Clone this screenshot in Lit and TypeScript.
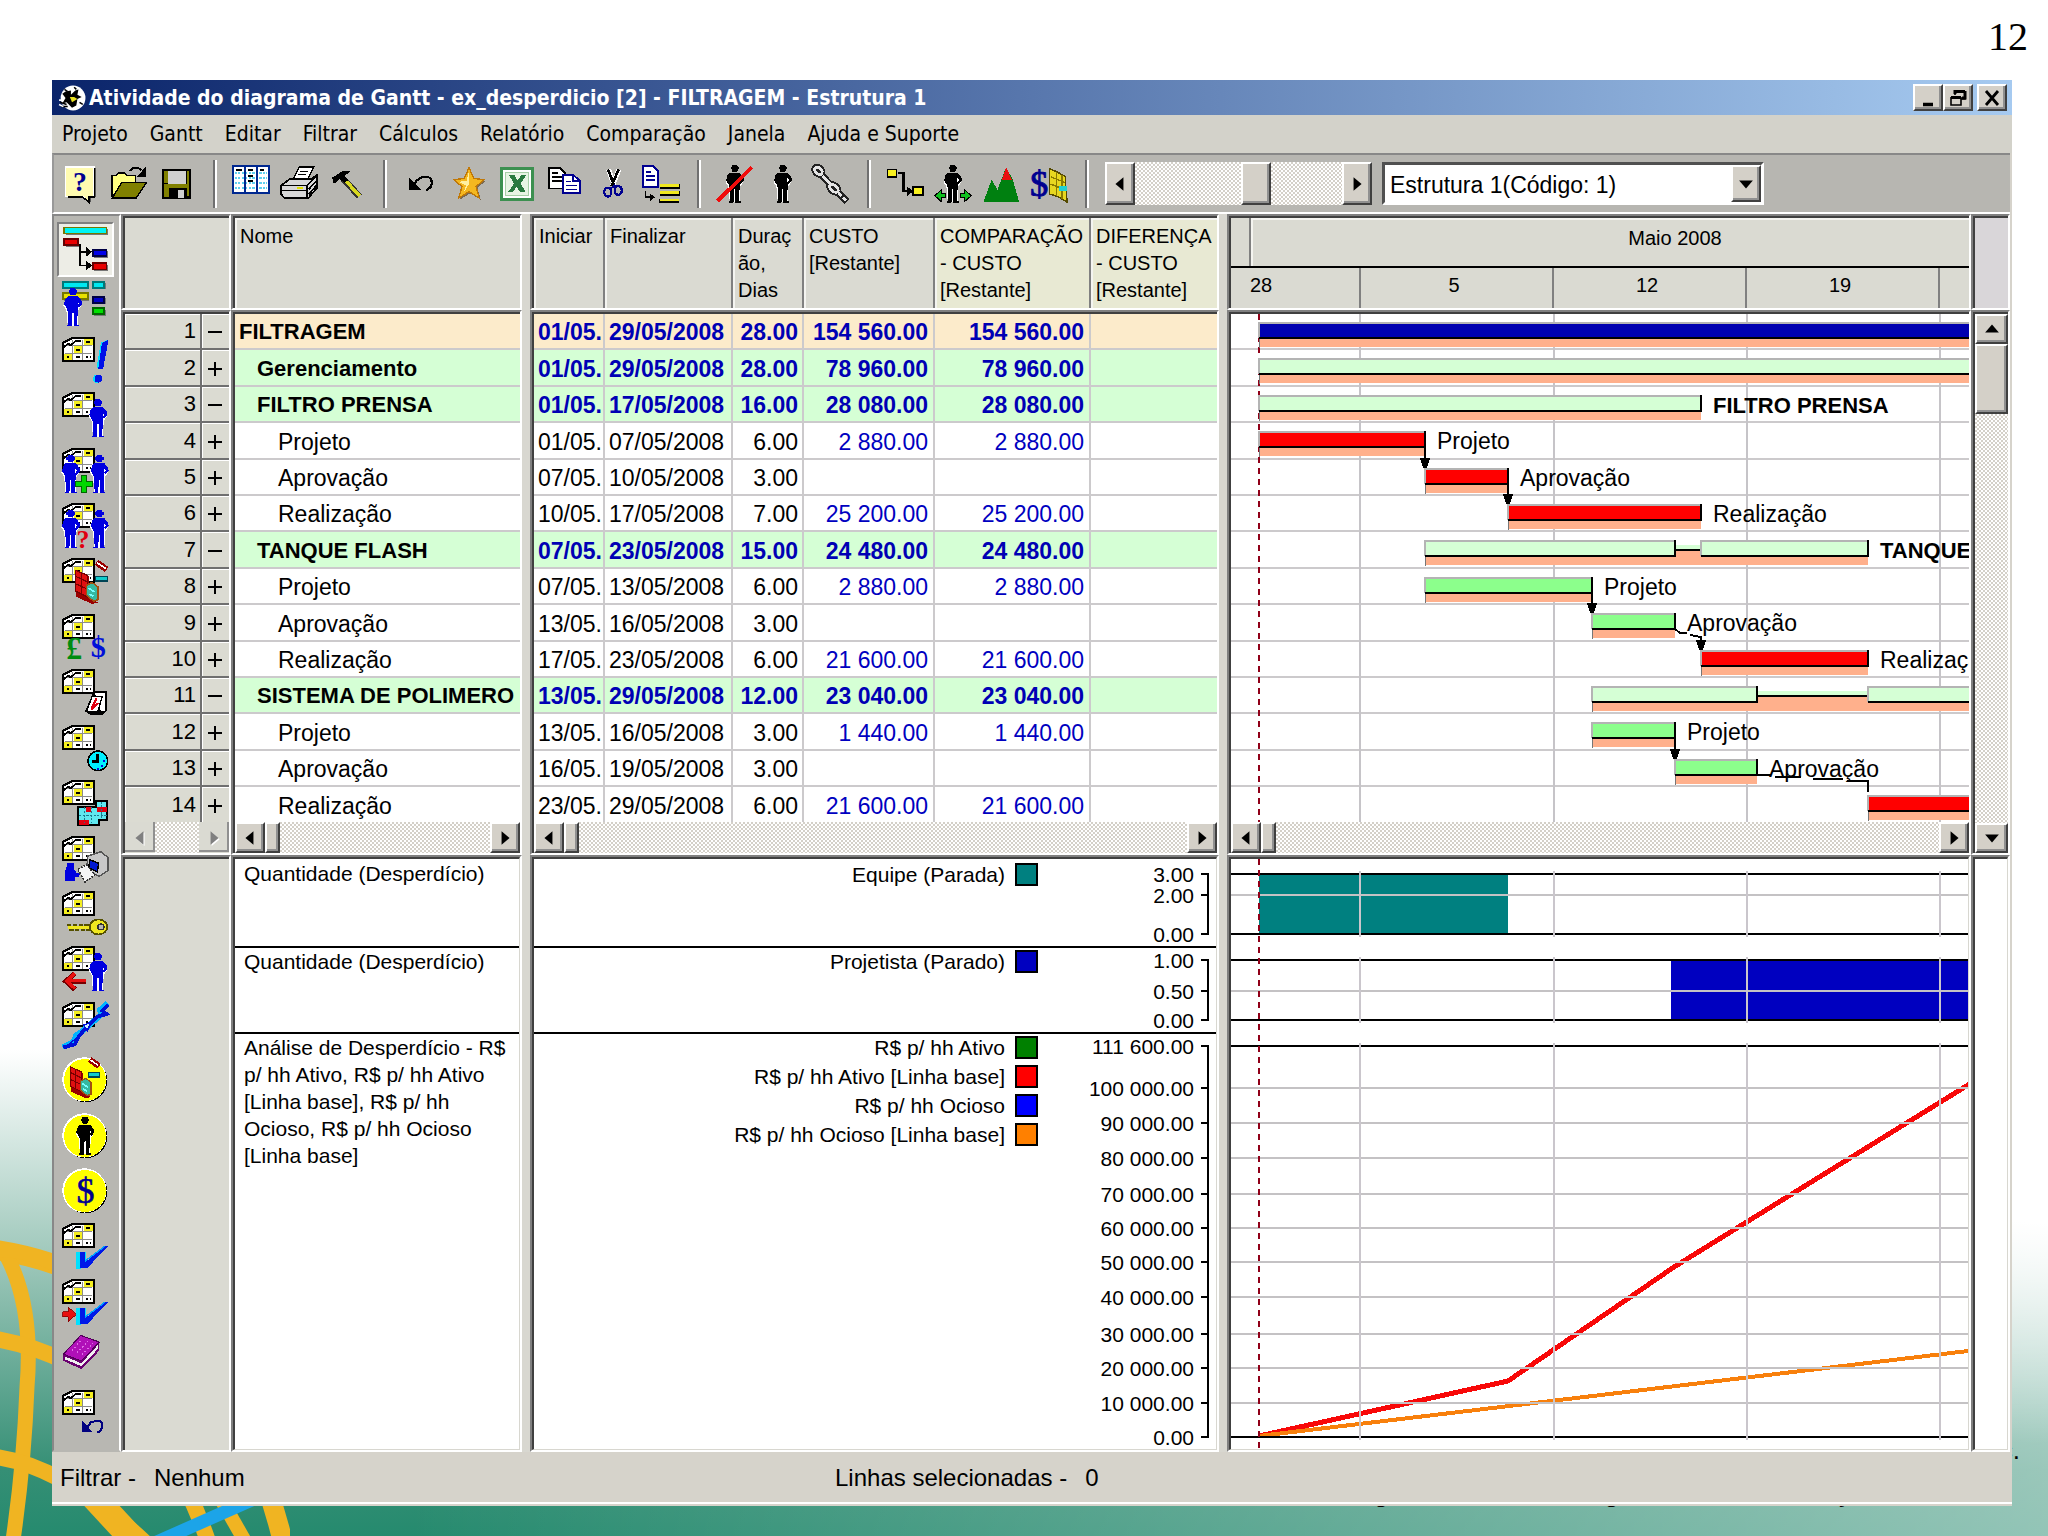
import { LitElement, html, svg, css, nothing, type TemplateResult } from "lit";
import { customElement } from "lit/decorators.js";
import { classMap } from "lit/directives/class-map.js";

type Art = TemplateResult | TemplateResult[];

/* ---------- icon parts (32-unit grid for the side bar, 26 for the tool bar) ---------- */

const sheet = svg`
  <path d="M0.7 4L7 0.8H22.2V16.8H0.7Z" fill="#fff" stroke="#000" stroke-width="1.5"/>
  <path d="M7.5 2V16M14.5 2V16M2 6H21M2 11.5H21" stroke="#8c8c8c" stroke-width="0.9"/>
  <path d="M15.2 1.6h6.3v3.9h-6.3zM8.2 6.6h5.8v4.4H8.2zM1.5 12.1h5.4v4H1.5z" fill="#f4ee20"/>
  <path d="M17 3.5h2.8M9.8 8.8h2.8M3.4 14h1.5M9.6 14h2.8M16.6 14h1.3M19.2 14h1.3" stroke="#000" stroke-width="1.3"/>
  <path d="M1 7.4L4 4.8L6.5 5.6L9.4 2.8L13.5 2.6" stroke="#000" stroke-width="1.4" fill="none"/>`;

const person = (x: number, y: number, fill: string, k = 1) => svg`
  <g transform="translate(${x} ${y}) scale(${k})">
    <path d="M2 7L0 12L2 15L3 26H10L10.5 15L12.5 12L11 8Z" fill="#fff"/>
    <rect x="4.4" y="0" width="4.2" height="4.8" rx="1" fill=${fill}/>
    <path d="M3.6 1.6H9.4V3H3.6Z" fill=${fill}/>
    <path d="M3 5.6H10L12.6 8.6L13 11L10.6 13.6L10 12L11 10.6L9.8 9.4L10 16L9.4 25.4H10.6V26.6H7V17H6.2L5.6 26.6H2.4V25.4H3.2L2.8 15L1.6 12.6L0.4 11L1.4 7.4Z" fill=${fill}/>
  </g>`;

const door = svg`
  <path d="M9 9L19 13V27L25 31L21 32L10 27Z" fill="#900"/>
  <path d="M9.5 8.5L17.5 12V27L9.5 23Z" fill="#e01010" stroke="#700" stroke-width="0.8"/>
  <path d="M10 13L17.5 16.6M10 18L17.5 21.6M13.5 10.5V25" stroke="#700" stroke-width="0.9"/>
  <path d="M17 19L21 17L25 20V29L22 30L17 26Z" fill="#35b8a0" stroke="#a05010"/>
  <path d="M18.5 21l4 2.6M19 25l3 1.6" stroke="#7ff" stroke-width="1.2"/>
  <path d="M24 3L31 8" stroke="#900" stroke-width="4.4"/><path d="M24.4 3.2L30.4 7.4" stroke="#fff" stroke-width="1.2"/>
  <path d="M23 14.5H32" stroke="#045" stroke-width="4"/><path d="M23.5 14H31" stroke="#1cc" stroke-width="2.2"/>`;

const coin = svg`
  <circle cx="16.4" cy="16.4" r="15.2" fill="#000"/>
  <circle cx="15.6" cy="15.6" r="15.4" fill="#fff"/>
  <circle cx="16" cy="16" r="14.6" fill="#ffff00"/>`;

const tick = svg`
  <path d="M9.5 20V32H13L17 25V20Z" fill="#00e0ff"/>
  <path d="M12.5 20.5H16V27.5L30 16H32L17.5 31.5H12.5Z" fill="#0018e8"/>
  <path d="M16 26.5L30 16" stroke="#00a0ff" stroke-width="1"/>`;

const slab = (x: number, y: number, w: number, h: number, fill: string, edge: string) => svg`
  <rect x=${x + 1} y=${y + 1} width=${w} height=${h} fill="#777"/>
  <rect x=${x} y=${y} width=${w} height=${h} fill=${fill} stroke=${edge} stroke-width="1.3"/>`;

const glyph = (x: number, y: number, size: number, fill: string, ch: string) => svg`
  <text x=${x} y=${y} font-size=${size} font-weight="700" fill=${fill}
    font-family="Liberation Serif, serif">${ch}</text>`;

const sideIcons: { label: string; art: Art; bare?: boolean }[] = [
  {
    label: "Gantt", bare: true, art: svg`${slab(1.5, 1, 29.5, 4.2, "#00f4f4", "#777700")}
      ${slab(1.5, 9, 9.5, 4.5, "#e80000", "#600")}
      <path d="M12.5 12.5V27.5H19M12.5 18H19" stroke="#000" stroke-width="1.3" fill="none"/>
      <path d="M17 14.8L21 18L17 21.2ZM17 24.3L21 27.5L17 30.7Z"/>
      ${slab(21.5, 16.5, 9.5, 4.5, "#0000e8", "#004")}
      ${slab(21.5, 25.8, 9.5, 4.5, "#e80000", "#600")}`,
  },
  {
    label: "Recursos", bare: true, art: svg`${slab(0.5, 0.6, 17.5, 4, "#00e8f0", "#077")}
      ${slab(21.5, 0.6, 8, 4, "#00e8f0", "#077")}
      ${slab(0.5, 8.6, 17.5, 4, "#e8e000", "#770")}
      ${slab(21.5, 11, 8, 4.2, "#0000c8", "#004")}
      ${slab(21.5, 19, 8, 4.2, "#00e000", "#060")}${person(1, 5, "#0000e0")}`,
  },
  {
    label: "Prioridade", art: svg`<path d="M27 4L32 2L27.5 21.5H24Z" fill="#00e0ff"/>
      <path d="M27.8 4L32.4 2L28.6 22H25.2Z" fill="#0010e8"/>
      <circle cx="24.4" cy="29" r="2.9" fill="#00e0ff"/><circle cx="25.3" cy="29" r="2.7" fill="#0010e8"/>`,
  },
  { label: "Responsável", art: person(18.5, 5, "#0000e0") },
  {
    label: "Adicionar equipe", art: svg`${person(-0.5, 5, "#0000e0")}${person(19.5, 5, "#0000e0")}
      <path d="M13.5 19h3.6v4.2h4.2v3.6h-4.2V31h-3.6v-4.2H9.4v-3.6h4.1z" fill="#00d800" stroke="#060" stroke-width="0.9"/>`,
  },
  { label: "Consultar equipe", art: svg`${person(-0.5, 5, "#0000e0")}${person(19.5, 5, "#0000e0")}${glyph(10, 31, 18, "#e00010", "?")}` },
  { label: "Materiais", art: door },
  { label: "Custos", art: svg`${glyph(3, 31, 22, "#008c10", "£")}${glyph(20, 30, 21, "#0010d8", "$")}` },
  {
    label: "Calendário", art: svg`<path d="M22 15.5H31.5V29L28 32H20L16 29.5Z" fill="#000"/>
      <path d="M23 17H30V29H27" fill="#fff"/><path d="M21 19H28L25 29.5H17Z" fill="#fff" stroke="#000"/>
      <path d="M24 20.5L21.6 25.6L23.4 25L20.4 28.4" stroke="#e00010" stroke-width="1.7" fill="none"/>`,
  },
  {
    label: "Horário", art: svg`<circle cx="25" cy="25" r="6.8" fill="#00f0ff" stroke="#000" stroke-width="1.1"/>
      <path d="M24.6 20V25.4H20.6" stroke="#000" stroke-width="1.7" fill="none"/>
      <path d="M25 29.6v1.4M29.4 24.6v1.4M28 28v1.4" stroke="#0010d8" stroke-width="1.5"/>`,
  },
  {
    label: "Turnos", art: svg`<path d="M11 18.5H23.5V14.5H31.4V27.5H25.5V31.3H11Z" fill="#60e8f0" stroke="#000" stroke-width="1.4"/>
      <path d="M24 20.5h7M12 29.5h7M17 20.5h3" stroke="#e00010" stroke-width="3"/>
      <path d="M12 24.8H31M15.5 19V30M20.5 19V30M27.5 15V27" stroke="#1a7c90" stroke-width="0.7" stroke-dasharray="1.5 1"/>`,
  },
  {
    label: "Estação", art: svg`<path d="M18 14L27 11L32 15V24L26 28L17 24Z" fill="#c8c8c8" stroke="#555"/>
      <path d="M19.5 16.5L25.5 19L24.5 25L18.5 22Z" fill="#0018d0" stroke="#000"/>
      <path d="M11 23L17 20L23 27L16 32Z" fill="#f4f4f4" stroke="#333" stroke-dasharray="1.4 0.8"/>
      <path d="M4 18.5h4v4l2 3 2.6 1-1 2H9v3H2.4V24Z" fill="#0000e0"/>`,
  },
  {
    label: "Chave", art: svg`<path d="M3.5 23.5H21M5 27H20" stroke="#555000" stroke-width="1.2" stroke-dasharray="3 1"/>
      <rect x="4" y="24" width="18" height="2.6" fill="#f0e820"/>
      <ellipse cx="25.4" cy="25" rx="6.2" ry="5.2" fill="#f0e820" stroke="#555000" stroke-width="1.2"/>
      <ellipse cx="27" cy="25" rx="2.2" ry="2" fill="#b8b7b2" stroke="#333"/>`,
  },
  {
    label: "Remover responsável", art: svg`${person(18.5, 5, "#0000e0")}
      <path d="M17 24.6H4.5M9 19L2.8 24.6L9 30.2" stroke="#700" stroke-width="3.6" fill="none"/>
      <path d="M16.6 24.2H4.6M9 19L3.2 24.4L9 29.6" stroke="#e81010" stroke-width="2.2" fill="none"/>`,
  },
  {
    label: "Vínculos", art: svg`<path d="M31.5 0.8L26.5 5.5L27 9L14.5 20L10 23L8 28L0.5 31.4" stroke="#00b4ff" stroke-width="4" fill="none"/>
      <path d="M32 2L28 6L31 8.4L25 10L14.5 20.5L11 25L9 29.5L1 31.6" stroke="#0010d8" stroke-width="2.6" fill="none"/>
      <path d="M15 16l5.5-2-3 6zM5 29l4-3" fill="#cef" stroke="#0010d8"/>`,
  },
  { label: "Materiais parados", bare: true, art: svg`${coin}<g transform="translate(-3 -1) scale(0.93)">${door}</g>` },
  { label: "Pessoal parado", bare: true, art: svg`${coin}${person(9.5, 2.6, "#000")}` },
  { label: "Valores", bare: true, art: svg`${coin}<text x="10" y="24" font-size="25" fill="#000090" stroke="#000090" stroke-width="0.4" font-family="Liberation Serif, serif">$</text>` },
  { label: "Confirmar", art: tick },
  {
    label: "Confirmar entrada", art: svg`${tick}
      <path d="M0.5 22.8H4.5V19.6L10 24.6L4.5 29.6V26.4H0.5Z" fill="#e81010" stroke="#800" stroke-width="0.6"/>`,
  },
  {
    label: "Livro", bare: true, art: svg`<path d="M0.5 14.5L13 0.5L26 5.5V11.5L13.5 24.5L0.5 18.5Z" fill="#6a0070"/>
      <path d="M2 15.6L13.4 20.4L25 7.6V10.4L13.6 22.4L2 17.6Z" fill="#f0f0f0"/>
      <path d="M1 14L13 1L26 5.6L13.4 18.8Z" fill="#b010b8" stroke="#500058" stroke-width="0.7"/>
      <path d="M7 11.5L14 3.6M10.5 13L18 5M14 14.4L21.5 6.2" stroke="#e070e8" stroke-width="1" stroke-dasharray="1 1.6"/>`,
  },
  {
    label: "Desfazer filtro", art: svg`<path d="M14 21L14 29H21Z" fill="#000080"/>
      <path d="M17.5 26L20 22.6Q28.6 19.4 28 25.6Q27 29 24.5 29.4" stroke="#000080" stroke-width="1.5" fill="none"/>`,
  },
];

const toolGroups: { label: string; art: Art }[][] = [
  [
    {
      label: "Ajuda", art: svg`<path d="M4.5 2H23.5V22H19.5V25.5L15.5 22H3V3Z" fill="#555"/>
        <path d="M2.5 1.5H22V21.5H18V25L14 21.5H2.5Z" fill="#fffbb0" stroke="#fff"/>
        <path d="M22.3 2V21.8H18.4V25.5L14 21.8H4" stroke="#000" fill="none"/>${glyph(7.5, 18, 19, "#000090", "?")}`,
    },
    {
      label: "Abrir", art: svg`<path d="M1.5 22V7H4L5.5 5.5H10L11.5 7H17.5V11.5" fill="#ffff80" stroke="#000"/>
        <path d="M1.5 22.5L8 12H25L18 22.5Z" fill="#808000" stroke="#000"/>
        <path d="M13.5 4Q17 -0.2 21.5 3.5" stroke="#000" stroke-width="1.3" fill="none"/><path d="M24.5 1V8.2H18.5Z"/>`,
    },
    {
      label: "Salvar", art: svg`<rect x="2.6" y="3" width="20" height="20" fill="#000"/><path d="M4 4.4H7V12H4zM19.5 4.4h2v17h-2zM4 13h17v3H4z" fill="#808000"/>
        <rect x="7" y="3.8" width="12.4" height="9" fill="#d0d0d0"/><path d="M4 15h3.5v7H4z" fill="#808000"/>
        <rect x="13.6" y="17.4" width="4" height="5" fill="#d0d0d0"/>`,
    },
  ],
  [
    {
      label: "Tabela", art: svg`<rect x="0.8" y="0.8" width="24.4" height="18.4" fill="#fff" stroke="#002890" stroke-width="1.6"/>
        <path d="M2 5.5H24M2 9H24M2 12.5H24M2 16H24" stroke="#60d0f0" stroke-width="1.3" stroke-dasharray="1.4 1"/>
        <path d="M9 1V19M17 1V19" stroke="#002890" stroke-width="1.2"/><path d="M3 3.4h3.6M11 3.4h3.6M19 3.4h3M11 7.4h3.6M11 11h3.6" stroke="#000" stroke-width="1.5"/>`,
    },
    {
      label: "Imprimir", art: svg`<path d="M9 9.5L13 1.5H23L19 9.5Z" fill="#fff" stroke="#000"/><path d="M13.4 4.4H19M12.4 6.6H18" stroke="#000"/>
        <path d="M0.8 14L7 9.5H21.5L25.4 6.8V15.5L19.5 22.5H3L0.8 20Z" fill="#d8d8d8" stroke="#000" stroke-width="1.2"/>
        <path d="M1 14H18.5L25 7.5M18.5 14V22M1.5 17.5H18.5M19.8 20L25 14M19.6 16.6L25 10.8" stroke="#000" stroke-width="1.2" fill="none"/>
        <path d="M11.5 15.8h4" stroke="#e0e000" stroke-width="1.8"/>`,
    },
    {
      label: "Construir", art: svg`<path d="M10.5 9.5L21.5 21.5" stroke="#333" stroke-width="4.4"/><path d="M11 9.5L21.5 21" stroke="#d8d820" stroke-width="2.4"/>
        <path d="M3.4 12L3 8.6L9.6 4.4L15.4 4L11.5 7.5L14 10L11.4 12.5L8 9.6L4.6 12.6Z" fill="#000"/>`,
    },
  ],
  [
    {
      label: "Desfazer", art: svg`<path d="M4.5 8V16.8H13Z"/><path d="M8.6 12.6Q12 7.4 17.6 8Q21.4 9.6 20 14.6L16.8 17.6" stroke="#000" stroke-width="1.5" fill="none"/>`,
    },
    {
      label: "Favoritos", art: svg`<path d="M13.8 2.6L17 10.2L24.4 11L18.8 15.6L21 23.8L13.8 19.4L6.6 23.8L8.8 15.6L3.2 11L10.6 10.2Z" fill="#7a6a50"/>
        <path d="M13 1.8L16.2 9.2L23.4 10L17.8 14.8L20 22.6L13 18.2L6 22.6L8.2 14.8L2.6 10L9.8 9.2Z" fill="#f4b820" stroke="#c07808" stroke-width="0.9"/>
        <path d="M13 4.6L11.2 11L6 11.4L11 14L9.4 19L13 13Z" fill="#fff0a0"/>`,
    },
    {
      label: "Excel", art: svg`<rect x="2.4" y="2.4" width="21" height="21" fill="#fff" stroke="#3c9050" stroke-width="2.2"/>
        <rect x="5" y="5" width="15.8" height="15.8" fill="#e8f4e4" stroke="#a8cfa8" stroke-width="0.8"/>
        <path d="M7.5 7H11.4L13.4 10.6L16 7H19.4L15.4 12.6L19 18.6H15L12.8 14.8L10 18.6H6.8L11 12.8Z" fill="#2a7a40"/>`,
    },
    {
      label: "Copiar", art: svg`<path d="M2 2H9.5L13 5.5V16H2Z" fill="#fff" stroke="#000" stroke-width="1.2"/><path d="M4 5.5H8M4 8.2H11M4 10.8H11" stroke="#000" stroke-width="1.1"/>
        <path d="M11.5 6.8H18.6L23.4 11V19.4H11.5Z" fill="#fff" stroke="#000090" stroke-width="1.3"/><path d="M18.6 7V11H23" stroke="#000090" fill="none"/>
        <path d="M13.6 11.4h3.6M13.6 14h7.4M13.6 16.8h7.4" stroke="#000090" stroke-width="1.1"/>`,
    },
    {
      label: "Recortar", art: svg`<path d="M10 3L14 14.5M17 3L12.6 14.5" stroke="#fff" stroke-width="3.4"/><path d="M9.6 3L14 14.5M16.8 3L12 14.5" stroke="#000" stroke-width="1.8"/>
        <ellipse cx="9.4" cy="18.6" rx="2.4" ry="3" fill="none" stroke="#000090" stroke-width="1.6"/>
        <ellipse cx="16.6" cy="17.4" rx="2.4" ry="3" fill="none" stroke="#000090" stroke-width="1.6"/><path d="M11.5 16L14 14L15 15" stroke="#000090" stroke-width="1.4" fill="none"/>`,
    },
    {
      label: "Colar linhas", art: svg`<path d="M0.8 0.8H7.6L11 4.4V15H0.8Z" fill="#fff" stroke="#000090" stroke-width="1.4"/><path d="M3 4.6H6M3 7.4H9M3 10.4H9" stroke="#000090" stroke-width="1.2"/>
        <path d="M2.4 17.5V22H7" stroke="#000" stroke-width="1.3" fill="none"/><path d="M5.4 19.4L9 22L5.4 24.8Z"/>
        <path d="M12 14.6H26M12 19.6H26M11.6 24.6H25.4" stroke="#000" stroke-width="3.2"/><path d="M12.4 14H25.4M12 19H25.4M12 24H25" stroke="#f0e820" stroke-width="1.8"/>`,
    },
  ],
  [
    { label: "Sem recurso", art: svg`${person(6.5, 0, "#000", 0.97)}<path d="M1 24.6L24.6 1.6" stroke="#f00c0c" stroke-width="2.6"/>` },
    { label: "Recurso", art: person(6.5, 0, "#000", 0.97) },
    {
      label: "Vínculo", art: svg`<g stroke="#222" stroke-width="4.6" fill="none"><ellipse cx="4.4" cy="4" rx="2" ry="3" transform="rotate(-45 4.4 4)"/>
        <path d="M7 7.4L12.4 13"/><ellipse cx="15" cy="16" rx="2" ry="3.4" transform="rotate(-50 15 16)"/><path d="M18 19L24 25"/></g>
        <g stroke="#e4e4e4" stroke-width="2" fill="none"><ellipse cx="4.4" cy="4" rx="2" ry="3" transform="rotate(-45 4.4 4)"/>
        <path d="M7 7.4L12.4 13"/><ellipse cx="15" cy="16" rx="2" ry="3.4" transform="rotate(-50 15 16)"/><path d="M18 19L24 25" stroke-dasharray="3 1.4"/></g>`,
    },
  ],
  [
    {
      label: "Ligar tarefas", art: svg`<rect x="0.8" y="3" width="6.6" height="5.2" fill="#f8f020" stroke="#000" stroke-width="0.8"/><path d="M8 5.6H12V18H16.6" stroke="#000" stroke-width="1.5" fill="none"/>
        <path d="M14.4 14.6L18.6 18L14.4 21.4Z"/><rect x="18.4" y="15" width="6.8" height="5.4" fill="#f8f020" stroke="#000" stroke-width="1.2"/>`,
    },
    {
      label: "Nivelar", art: svg`${person(6.5, 0, "#000", 0.97)}
        <path d="M0.5 21L5 17V19.6H8V22.4H5V25ZM25.5 21L21 17V19.6H18V22.4H21V25Z" fill="#10c020" stroke="#000" stroke-width="0.7"/>`,
    },
    {
      label: "Picos", art: svg`<path d="M1 25.4L6.6 10L10.6 17L16.5 1.4L21 10L25.4 25.4Z" fill="#008010"/>
        <path d="M16.5 1.4L20.4 10H13.6Z" fill="#e81010"/>`,
    },
    {
      label: "Custos", art: svg`<path d="M13.5 2.5L18 4.5L24.4 8V13L25.4 25.4L19 21.5L13.5 20Z" fill="#e8d820" stroke="#554a00"/>
        <path d="M14 8L24 12M14 13L24 17M18 4.5V21M22 7V23" stroke="#8a7a00"/><path d="M20 14.5h5v3.5h-5z" fill="#20d0d0"/>
        <text x="0" y="21" font-size="25" fill="#000090" stroke="#000090" stroke-width="0.6" font-family="Liberation Serif, serif">$</text>`,
    },
  ],
];

/* ---------- data ---------- */

type Kind = "project" | "group" | "task";
interface Row {
  kind: Kind; name: string; open: boolean;
  start: string; end: string; days: string; cost: string;
}
const rows: Row[] = [
  { kind: "project", name: "FILTRAGEM", open: true, start: "01/05.", end: "29/05/2008", days: "28.00", cost: "154 560.00" },
  { kind: "group", name: "Gerenciamento", open: false, start: "01/05.", end: "29/05/2008", days: "28.00", cost: "78 960.00" },
  { kind: "group", name: "FILTRO PRENSA", open: true, start: "01/05.", end: "17/05/2008", days: "16.00", cost: "28 080.00" },
  { kind: "task", name: "Projeto", open: false, start: "01/05.", end: "07/05/2008", days: "6.00", cost: "2 880.00" },
  { kind: "task", name: "Aprovação", open: false, start: "07/05.", end: "10/05/2008", days: "3.00", cost: "" },
  { kind: "task", name: "Realização", open: false, start: "10/05.", end: "17/05/2008", days: "7.00", cost: "25 200.00" },
  { kind: "group", name: "TANQUE FLASH", open: true, start: "07/05.", end: "23/05/2008", days: "15.00", cost: "24 480.00" },
  { kind: "task", name: "Projeto", open: false, start: "07/05.", end: "13/05/2008", days: "6.00", cost: "2 880.00" },
  { kind: "task", name: "Aprovação", open: false, start: "13/05.", end: "16/05/2008", days: "3.00", cost: "" },
  { kind: "task", name: "Realização", open: false, start: "17/05.", end: "23/05/2008", days: "6.00", cost: "21 600.00" },
  { kind: "group", name: "SISTEMA DE POLIMERO", open: true, start: "13/05.", end: "29/05/2008", days: "12.00", cost: "23 040.00" },
  { kind: "task", name: "Projeto", open: false, start: "13/05.", end: "16/05/2008", days: "3.00", cost: "1 440.00" },
  { kind: "task", name: "Aprovação", open: false, start: "16/05.", end: "19/05/2008", days: "3.00", cost: "" },
  { kind: "task", name: "Realização", open: false, start: "23/05.", end: "29/05/2008", days: "6.00", cost: "21 600.00" },
];

/* Row tops follow the table rows: 36 and 37 pixels in a repeating set of five. */
const tops = [0, 36, 73, 109, 146, 182, 218, 255, 291, 328, 364, 400, 437, 473];
const weeks = [129, 323, 516, 709];
const FAR = 4000;

interface Bar { row: number; spans: [number, number][]; color: string; label?: string; bold?: boolean }
const PALE = "#d5ffd5", RED = "#ff0000", GREEN = "#8cff8c";
const bars: Bar[] = [
  { row: 0, spans: [[28, FAR]], color: "#0000b0" },
  { row: 1, spans: [[28, FAR]], color: PALE },
  { row: 2, spans: [[28, 470]], color: PALE, label: "FILTRO PRENSA", bold: true },
  { row: 3, spans: [[28, 194]], color: RED, label: "Projeto" },
  { row: 4, spans: [[194, 277]], color: RED, label: "Aprovação" },
  { row: 5, spans: [[277, 470]], color: RED, label: "Realização" },
  { row: 6, spans: [[194, 444], [470, 637]], color: PALE, label: "TANQUE FLASH", bold: true },
  { row: 7, spans: [[194, 361]], color: GREEN, label: "Projeto" },
  { row: 8, spans: [[361, 444]], color: GREEN, label: "Aprovação" },
  { row: 9, spans: [[470, 637]], color: RED, label: "Realização" },
  { row: 10, spans: [[361, 526], [637, FAR]], color: PALE },
  { row: 11, spans: [[361, 444]], color: GREEN, label: "Projeto" },
  { row: 12, spans: [[444, 526]], color: GREEN, label: "Aprovação" },
  { row: 13, spans: [[637, FAR]], color: RED },
];
const drops = [[194, 3], [277, 4], [361, 7], [444, 11]];

interface Track { title: string[]; legend: [string, string][]; ticks: [number, string][]; height: number }
const tracks: Track[] = [
  { title: ["Quantidade (Desperdício)"], legend: [["Equipe (Parada)", "#008080"]], ticks: [[15, "3.00"], [36, "2.00"], [75, "0.00"]], height: 86 },
  { title: ["Quantidade (Desperdício)"], legend: [["Projetista (Parado)", "#0000c0"]], ticks: [[12, "1.00"], [43, "0.50"], [72, "0.00"]], height: 83 },
  {
    title: ["Análise de Desperdício - R$", "p/ hh Ativo, R$ p/ hh Ativo", "[Linha base], R$ p/ hh", "Ocioso, R$ p/ hh Ocioso", "[Linha base]"],
    legend: [["R$ p/ hh Ativo", "#008000"], ["R$ p/ hh Ativo [Linha base]", "#ff0000"], ["R$ p/ hh Ocioso", "#0000ff"], ["R$ p/ hh Ocioso [Linha base]", "#ff8000"]],
    ticks: [[12, "111 600.00"], [54, "100 000.00"], [89, "90 000.00"], [124, "80 000.00"], [160, "70 000.00"], [194, "60 000.00"],
      [228, "50 000.00"], [263, "40 000.00"], [300, "30 000.00"], [334, "20 000.00"], [369, "10 000.00"], [403, "0.00"]],
    height: 415,
  },
];

const menus = ["Projeto", "Gantt", "Editar", "Filtrar", "Cálculos", "Relatório", "Comparação", "Janela", "Ajuda e Suporte"];

@customElement("app-root")
export class AppRoot extends LitElement {
  static styles = css`
    :host { display: block; font-family: "Liberation Sans", Arial, sans-serif; color: #000; }
    * { box-sizing: border-box; }
    button { font: inherit; color: inherit; padding: 0; margin: 0; }
    svg { display: block; }

    .slide {
      position: relative; min-height: 100vh; display: flex; flex-direction: column; overflow: hidden;
      padding: 0 36px 31px 52px;
      background:
        radial-gradient(ellipse 50% 22% at 103% 72%, #fff 35%, rgba(255, 255, 255, 0) 100%),
        linear-gradient(to right, rgba(255, 255, 255, 0) 20%, rgba(255, 255, 255, 0.5)),
        linear-gradient(#fff 1050px, #8fbfb0 1290px, #358f75 1470px, #258a6e);
    }
    .globe { position: absolute; left: 0; bottom: 0; }
    .under { position: absolute; font-size: 26px; line-height: 30px; }
    .source { right: 28px; bottom: 72px; }
    .note { right: 200px; bottom: 29px; display: flex; gap: 216px; }
    .page { height: 80px; margin: 0 -16px 0 0; text-align: right; font: 40px/40px "Liberation Serif", "Times New Roman", serif; padding: 17px 0 0 0; }

    .window { position: relative; flex: 1; display: flex; flex-direction: column; background: #d6d3cb; }
    .title {
      height: 35px; display: flex; align-items: center; padding: 0 5px 0 6px; color: #fff;
      background: linear-gradient(to right, #0a246a, #a6caf0);
      font: bold 21px/30px "DejaVu Sans Condensed", "Noto Sans", sans-serif;
    }
    .title h1 { font: inherit; margin: 0 0 0 3px; flex: 1; white-space: nowrap; }
    .raised {
      background: #d4d0c8; border: 2px solid; border-color: #fff #404040 #404040 #fff;
      box-shadow: inset -2px -2px #909090; border-radius: 0; display: flex; align-items: center; justify-content: center;
    }
    .sys { width: 30px; height: 27px; }
    .sys.close { margin-left: 4px; }

    .menu { height: 38px; display: flex; align-items: center; background: #d3d2ca; }
    .menu button { border: 0; background: none; padding: 0 11px; font: 21px/30px "DejaVu Sans Condensed", "Noto Sans", sans-serif; }
    .menu button:first-child { padding-left: 10px; }

    .tools {
      height: 61px; margin-right: 2px; display: flex; align-items: center; background: #b7b6b1;
      border-top: 2px solid #888; border-left: 2px solid #999; border-bottom: 2px solid #fff; padding-left: 2px;
    }
    .tool { width: 48px; height: 44px; padding-left: 2px; border: 0; background: none; display: flex; align-items: center; justify-content: center; }
    .tool svg, .side svg { overflow: visible; flex: none; shape-rendering: crispEdges; }
    .sep { width: 4px; height: 48px; margin: 0 9px 0 13px; border-left: 2px solid #707070; border-right: 2px solid #fff; }
    .pan { display: flex; margin-left: 7px; height: 43px; }
    .pan button { width: 30px; }
    .pan input { appearance: none; width: 207px; margin: 0; height: 43px; }
    .pan input, .track { background: repeating-conic-gradient(#fff 0 25%, #d4d0c8 0 50%) 0 0 / 4px 4px; }
    .pan input::-webkit-slider-thumb {
      appearance: none; width: 30px; height: 43px; background: #d4d0c8; border: 2px solid;
      border-color: #fff #404040 #404040 #fff; box-shadow: inset -2px -2px #909090;
    }
    .combo {
      position: relative; width: 382px; height: 43px; margin-left: 10px; background: #fff; display: flex;
      border: 3px solid; border-color: #505050 #fff #fff #505050;
    }
    .combo select { appearance: none; flex: 1; border: 0; background: none; font: 23px/34px "Liberation Sans", Arial, sans-serif; padding: 2px 32px 0 5px; color: #000; }
    .combo .arrow { position: absolute; right: 0; top: 0; bottom: 0; width: 30px; pointer-events: none; }

    .body { flex: 1; display: flex; margin-right: 2px; }
    .side {
      width: 69px; display: grid; grid-auto-rows: 1fr; padding: 6px 5px 9px 3px; background: #b8b7b2;
      border: 2px solid; border-color: #888 #fff #b8b7b2 #888;
    }
    .side button { border: 2px solid transparent; background: none; display: flex; align-items: flex-start; justify-content: flex-start; padding: 2px 0 0 3px; }
    .side .on { background: #edede6; border-color: #808080 #fff #fff #808080; }

    .panes {
      flex: 1; min-width: 0; display: grid; background: #d8d7d0;
      grid-template-columns: 110px 291px 8px 689px 8px minmax(0, 1fr) 39px;
      grid-template-rows: 96px auto minmax(0, 1fr);
    }
    .pane { min-width: 0; border: 2px solid; border-color: #808080 #fff #fff #808080; display: flex; }
    .in { flex: 1; min-width: 0; display: flex; flex-direction: column; border: 2px solid #404040; border-right: 0; border-bottom: 0; background: #dadad2; overflow: hidden; }
    .white .in { background: #fff; }
    .lower .in { border-right: 1px solid #d8d7d0; border-bottom: 1px solid #d8d7d0; }
    .flat .in { background: #d9d6d9; }
    .gap { grid-row: span 1; }

    table { border-collapse: separate; border-spacing: 0; table-layout: fixed; width: 100%; }
    th { text-align: left; vertical-align: top; font-weight: 400; font-size: 20px; line-height: 27px; padding: 5px 0 0 5px; height: 90px; white-space: nowrap; border-right: 2px solid #808080; box-shadow: inset 2px 2px #f4f4f0; }
    th:last-child { border-right: 0; }
    th.alt { background: #e8e9d3; }
    .c1 { width: 71px; } .c2 { width: 128px; } .c3 { width: 71px; } .c4 { width: 131px; } .c5 { width: 156px; }
    tbody tr { height: 36px; }
    tbody tr:nth-child(5n + 2), tbody tr:nth-child(5n + 4) { height: 37px; }
    tbody tr:last-child { height: 35px; }
    td { padding: 2px 5px 0 4px; font-size: 23px; line-height: 32px; white-space: nowrap; overflow: hidden; border-bottom: 2px solid #cccacc; border-right: 2px solid #cccacc; background: #fff; }
    td:last-child { border-right: 0; }
    tbody tr:last-child td { border-bottom: 0; }
    .num { text-align: right; }
    td.c3 { padding-right: 4px; }
    .cost { color: #0000c0; }
    .project td { background: #fcebcb; font-weight: 700; color: #0000b4; }
    .group td { background: #d5ffd5; font-weight: 700; color: #0000b4; }
    .names .project td, .names .group td { color: #000; font-size: 22px; }
    .names .group td { padding-left: 22px; }
    .names .task td { padding-left: 43px; }
    .nums td { background: #dbdbd2; color: #000; font-weight: 400; font-size: 22px; border-color: #707070; box-shadow: inset 1px 1px #fff; padding: 0 4px 0 0; text-align: right; }
    .nums td:last-child { padding: 0; text-align: center; }
    .nums button { border: 0; background: none; width: 26px; height: 30px; display: grid; place-items: center; padding-top: 2px; }
    .n1 { width: 77px; }

    .month, .weeks { display: flex; white-space: nowrap; font-size: 20px; line-height: 27px; }
    .month { height: 50px; border-bottom: 2px solid #000; }
    .month i { flex: none; width: 20px; border-right: 2px solid #808080; }
    .month b { flex: none; width: 848px; text-align: center; font-weight: 400; padding-top: 7px; box-shadow: inset 2px 2px #f4f4f0; }
    .weeks { flex: 1; }
    .weeks span { flex: none; width: 193px; text-align: center; padding: 4px 5px 0 0; border-right: 2px solid #808080; }
    .weeks span:first-child { width: 130px; text-align: left; padding-left: 19px; }

    .hbar { height: 31px; display: flex; }
    .hbar button { width: 30px; flex: none; }
    .thumb { flex: none; width: 15px; }
    .track { flex: 1; }
    .vbar { flex: 1; display: flex; flex-direction: column; }
    .vbar button { height: 30px; }
    .vthumb { height: 70px; }

    .section { display: flex; border-bottom: 2px solid #000; font-size: 21px; padding-right: 6px; }
    .section:last-child { border-bottom: 0; }
    .h0 { height: 89px; } .h1 { height: 86px; } .h2 { flex: 1; }
    .head { line-height: 27px; padding: 1px 0 0 9px; white-space: nowrap; }
    .h1 .head, .h2 .head { padding-top: 0; }
    .legend { flex: 1; display: flex; flex-direction: column; align-items: flex-end; gap: 6px; margin: 0; padding: 4px 33px 0 0; list-style: none; }
    .h1 .legend, .h2 .legend { padding-top: 2px; }
    .legend li { display: flex; gap: 10px; line-height: 23px; height: 23px; }
    .legend i { width: 23px; height: 23px; border: 2px solid #000; background: var(--ink); }

    .status { height: 50px; padding: 2px 8px 0; display: grid; grid-template-columns: 775px 1fr; align-items: center; font-size: 24px; line-height: 30px; }
    .status span { display: flex; gap: 18px; white-space: nowrap; }
    .foot { height: 4px; border-top: 2px solid #fff; }
  `;

  private arrow(dir: "left" | "right" | "up" | "down", off = false) {
    const d = { left: "M10 1V13L3 7Z", right: "M4 1V13L11 7Z", up: "M1 10H13L7 3Z", down: "M1 4H13L7 11Z" }[dir];
    return html`<svg width="16" height="16" viewBox="0 0 14 14" aria-hidden="true">
      ${off ? svg`<path d=${d} fill="#fff" transform="translate(1 1)"/>` : nothing}<path d=${d} fill=${off ? "#808080" : "#000"}/></svg>`;
  }

  private hbar(thumb = true) {
    return html`<div class="hbar">
      <button class="raised" aria-label="Rolar para a esquerda">${this.arrow("left", !thumb)}</button>
      ${thumb ? html`<div class="thumb raised"></div>` : nothing}
      <div class="track"></div>
      <button class="raised" aria-label="Rolar para a direita">${this.arrow("right", !thumb)}</button>
    </div>`;
  }

  private bar(b: Bar) {
    const y = tops[b.row] + 8;
    const last = b.spans[b.spans.length - 1][1];
    return svg`
      <rect x=${b.spans[0][0]} y=${y + 17} width=${last - b.spans[0][0]} height="8" fill="#ffb08c"/>
      ${b.spans.slice(1).map((s, i) => {
        const from = b.spans[i][1];
        return svg`<rect x=${from} y=${y + 5} width=${s[0] - from} height="5" fill=${PALE}/>
          <rect x=${from} y=${y + 11} width=${s[0] - from} height="8" fill="#ffb08c"/>
          <rect x=${from} y=${y + 9} width=${s[0] - from} height="2"/>`;
      })}
      ${b.spans.map(([a, z]) => svg`
        <rect x=${a} y=${y} width=${z - a} height="17" fill=${b.color}/>
        <path d="M${a} ${y + 16}V${y + 1}H${z}" stroke="#b4b4b4" stroke-width="2" fill="none"/>
        <path d="M${a} ${y + 16}H${z}V${y}" stroke="#000" stroke-width="2" fill="none"/>`)}
      <path d="M${b.spans[0][0]} ${y + 17}V${y + 26}" stroke="#777" stroke-width="1"/>
      ${b.label ? svg`<text x=${last + 12} y=${y + 18} font-size=${b.bold ? 22 : 23} font-weight=${b.bold ? 700 : 400}>${b.label}</text>` : nothing}`;
  }

  private gantt() {
    return html`<svg width="100%" height="508" role="img" aria-label="Diagrama de Gantt" shape-rendering="crispEdges">
      ${tops.slice(1).map((t) => svg`<rect x="0" y=${t - 2} width="100%" height="2" fill="#cccacc"/>`)}
      ${weeks.map((x) => svg`<rect x=${x - 1} y="0" width="2" height="508" fill="#c6c4c8"/>`)}
      <path d="M28 0V508" stroke="#900018" stroke-width="2" stroke-dasharray="6 5"/>
      ${bars.map((b) => this.bar(b))}
      ${drops.map(([x, r]) => svg`<path d=${`M${x} ${tops[r] + 24}V${tops[r + 1] + 4}`} stroke="#000" stroke-width="2"/>
        <path d=${`M${x - 5} ${tops[r + 1] - 2}H${x + 5}L${x + 2} ${tops[r + 1] + 8}H${x - 2}Z`}/>`)}
      <path d="M444 315L449 319H456M459 321L470 323V334" stroke="#000" stroke-width="2" fill="none"/>
      <path d="M465 326H475L472 336H468Z"/>
      <path d="M526 461H540M544 463H570M582 465H612M616 467H637V478" stroke="#000" stroke-width="2" fill="none"/>
    </svg>`;
  }

  private charts() {
    const frames = [[15, 75], [101, 161], [187, 578]];
    const faint = [36, 132, 229, 264, 299, 335, 369, 403, 438, 475, 509, 544];
    return html`<svg width="100%" height="590" role="img" aria-label="Análise de desperdício" shape-rendering="crispEdges">
      <rect x="28" y="15" width="249" height="60" fill="#008080"/>
      <rect x="440" y="101" width="4000" height="60" fill="#0000c0"/>
      <path d="M28 577L277 522L443 408L737 226L1051 32" stroke="#f80808" stroke-width="5" fill="none"/>
      <path d="M28 577L737 492L1446 407" stroke="#f8800c" stroke-width="4" fill="none"/>
      ${faint.map((y) => svg`<rect x="0" y=${y - 1} width="100%" height="2" fill="#c4c2c4"/>`)}
      ${frames.map(([a, z]) => svg`<rect x="0" y=${a - 1} width="100%" height="2"/><rect x="0" y=${z - 1} width="100%" height="2"/>
        ${weeks.map((x) => svg`<rect x=${x - 1} y=${a - 3} width="2" height=${z - a + 6} fill="#cac6cc"/>`)}`)}
      <path d="M28 0V590" stroke="#900018" stroke-width="2" stroke-dasharray="6 5"/>
    </svg>`;
  }

  private axis(t: Track) {
    const first = t.ticks[0][0], last = t.ticks[t.ticks.length - 1][0];
    return html`<svg width="139" height=${t.height} shape-rendering="crispEdges" role="img" aria-label="Escala">
      <path d="M137 ${first}V${last}${t.ticks.map(([y]) => `M130 ${y}H138`).join("")}" stroke="#000" stroke-width="2" fill="none"/>
      ${t.ticks.map(([y, label]) => svg`<text x="123" y=${y + 8} text-anchor="end" font-size="21">${label}</text>`)}
    </svg>`;
  }

  private pane(cls: string, content: unknown) {
    return html`<section class="pane ${cls}"><div class="in">${content}</div></section>`;
  }

  render() {
    return html`
      <main class="slide">
        <svg class="globe" width="290" height="310" viewBox="0 0 290 310" fill="none" stroke="#f0b422" aria-hidden="true">
          <path d="M-10 22Q150 44 240 200Q268 250 284 320" stroke-width="20"/>
          <path d="M4 24Q34 76 27 160Q24 240 12 320" stroke-width="15"/>
          <path d="M-4 112Q150 140 210 320" stroke-width="16"/>
          <path d="M-4 230Q70 240 160 330" stroke-width="16"/>
          <path d="M60 40Q20 20 -6 24" stroke-width="14"/>
          <path d="M90 266L140 320" stroke-width="26"/>
          <path d="M222 274L246 316" stroke-width="14"/>
          <path d="M150 318L254 272" stroke="#1ca4e8" stroke-width="13"/>
        </svg>
        <div class="under source">c.</div>
        <div class="under note"><span>g</span><span>g</span><span>ç</span></div>
        <div class="page">12</div>
        <div class="window">
          <header class="title">
            <svg width="28" height="28" viewBox="0 0 26 26" aria-hidden="true">
              <circle cx="14" cy="13" r="11.5" fill="#fff"/>
              <path d="M7 7L12 6L12 10L16 6L19 5L18 10L22 12L18 14L17 20L13 22L8 17L4 18L7 13L4 9Z" fill="#000"/>
              <path d="M11 12h4l3 2-5 3z" fill="#e8e020"/>
              <path d="M2 17l6 2M3 21l6 0M20 17l3 2M15 3l2 2M6 5l3 2" stroke="#000" stroke-width="1.4"/><path d="M1 15l4 0M1 19l4 2" stroke="#fff" stroke-width="1.5"/>
            </svg>
            <h1>Atividade do diagrama de Gantt - ex_desperdicio [2] - FILTRAGEM - Estrutura 1</h1>
            <button class="sys raised" aria-label="Minimizar"><svg width="20" height="20" viewBox="0 0 20 20"><path d="M5 16.5H15" stroke="#000" stroke-width="3.5"/></svg></button>
            <button class="sys raised" aria-label="Restaurar"><svg width="20" height="20" viewBox="0 0 20 20"><path d="M7 3.5H17M7 2V6M17 3V10H14M3 9.5H13" stroke="#000" stroke-width="3" fill="none"/><path d="M3 9V17H13V9M7 5V7M17 4V11H13" stroke="#000" stroke-width="1.6" fill="none"/></svg></button>
            <button class="sys close raised" aria-label="Fechar"><svg width="20" height="20" viewBox="0 0 20 20"><path d="M4 3L16 17M16 3L4 17" stroke="#000" stroke-width="2.8"/></svg></button>
          </header>
          <nav class="menu">${menus.map((m) => html`<button>${m}</button>`)}</nav>
          <div class="tools">
            ${toolGroups.map((g) => html`${g.map((t) => html`<button class="tool" aria-label=${t.label}>
              <svg width="38" height="38" viewBox="0 0 26 26">${t.art}</svg></button>`)}<span class="sep"></span>`)}
            <div class="pan">
              <button class="raised" aria-label="Recuar">${this.arrow("left")}</button>
              <input type="range" min="0" max="100" value="60" aria-label="Posição" />
              <button class="raised" aria-label="Avançar">${this.arrow("right")}</button>
            </div>
            <div class="combo">
              <select aria-label="Estrutura"><option>Estrutura 1(Código: 1)</option></select>
              <span class="arrow raised">${this.arrow("down")}</span>
            </div>
          </div>

          <div class="body">
            <aside class="side">
              ${sideIcons.map((s, i) => html`<button class=${classMap({ on: i === 0 })} aria-label=${s.label}>
                <svg width="46" height="46" viewBox="0 0 32 32">${s.bare ? nothing : sheet}${s.art}</svg></button>`)}
            </aside>
            <div class="panes">
              ${this.pane("", nothing)}
              ${this.pane("", html`<table><thead><tr><th>Nome</th></tr></thead></table>`)}
              <div class="gap"></div>
              ${this.pane("", html`<table><thead><tr>
                <th class="c1">Iniciar</th><th class="c2">Finalizar</th><th class="c3">Duraç<br />ão,<br />Dias</th>
                <th class="c4">CUSTO<br />[Restante]</th><th class="c5 alt">COMPARAÇÃO<br />- CUSTO<br />[Restante]</th>
                <th class="alt">DIFERENÇA<br />- CUSTO<br />[Restante]</th></tr></thead></table>`)}
              <div class="gap"></div>
              ${this.pane("", html`<div class="month"><i></i><b>Maio 2008</b></div>
                <div class="weeks"><span>28</span><span>5</span><span>12</span><span>19</span></div>`)}
              ${this.pane("flat", nothing)}

              ${this.pane("nums", html`<table><tbody>${rows.map((r, i) => html`<tr>
                <td class="n1">${i + 1}</td>
                <td><button aria-label=${r.open ? "Recolher" : "Expandir"}><svg width="16" height="16" viewBox="0 0 16 16">
                  <path d=${r.open ? "M1 8H15" : "M1 8H15M8 1V15"} stroke="#000" stroke-width="2"/></svg></button></td></tr>`)}</tbody></table>
                ${this.hbar(false)}`)}
              ${this.pane("white names", html`<table><tbody>${rows.map((r) => html`<tr class=${r.kind}><td>${r.name}</td></tr>`)}</tbody></table>${this.hbar()}`)}
              <div class="gap"></div>
              ${this.pane("white", html`<table><tbody>${rows.map((r) => html`<tr class=${r.kind}>
                <td class="c1">${r.start}</td><td class="c2">${r.end}</td><td class="c3 num">${r.days}</td>
                <td class="c4 num cost">${r.cost}</td><td class="c5 num cost">${r.cost}</td><td></td></tr>`)}</tbody></table>${this.hbar()}`)}
              <div class="gap"></div>
              ${this.pane("white", html`${this.gantt()}${this.hbar()}`)}
              ${this.pane("", html`<div class="vbar">
                <button class="raised" aria-label="Rolar para cima">${this.arrow("up")}</button>
                <div class="vthumb raised"></div><div class="track"></div>
                <button class="raised" aria-label="Rolar para baixo">${this.arrow("down")}</button></div>`)}

              ${this.pane("", nothing)}
              ${this.pane("white lower", tracks.map((t, i) => html`<div class="section h${i}">
                <div class="head">${t.title.map((l) => html`<div>${l}</div>`)}</div></div>`))}
              <div class="gap"></div>
              ${this.pane("white lower", tracks.map((t, i) => html`<div class="section h${i}">
                <ul class="legend">${t.legend.map(([n, c]) => html`<li>${n}<i style="--ink:${c}"></i></li>`)}</ul>
                ${this.axis(t)}</div>`))}
              <div class="gap"></div>
              ${this.pane("white lower", this.charts())}
              ${this.pane("white lower", nothing)}
            </div>
          </div>
          <footer class="status">
            <span>Filtrar -<span>Nenhum</span></span>
            <span>Linhas selecionadas -<span>0</span></span>
          </footer>
          <div class="foot"></div>
        </div>
      </main>`;
  }
}
